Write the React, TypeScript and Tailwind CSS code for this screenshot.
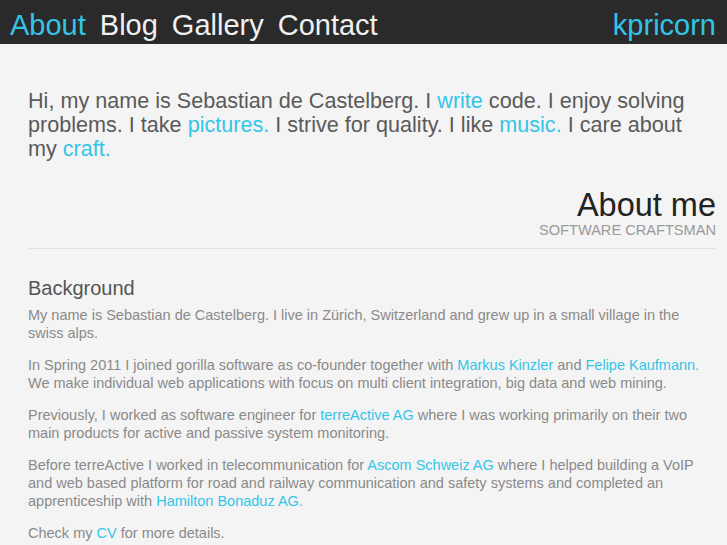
const blue = 'text-[#33c4e8]';

function A({ children }: { children: React.ReactNode }) {
  return <a className={blue}>{children}</a>;
}

export default function App() {
  return (
    <div className="min-h-[545px] bg-[#f4f4f4] font-['Liberation_Sans',sans-serif]">
      <header className="h-[44px] bg-[#2a2a2a] flex items-end justify-between pl-[10px] pr-[11px] pb-[4px]">
        <nav className="flex gap-[14px] text-[29px] leading-none text-[#f0f0f0]">
          <a className={blue}>About</a>
          <a>Blog</a>
          <a>Gallery</a>
          <a>Contact</a>
        </nav>
        <a className={`text-[29px] leading-none ${blue}`}>kpricorn</a>
      </header>

      <main className="pl-[28px] pr-[11px] pt-[45px]">
        <p className="pr-[20px] text-[21.6px] leading-[24px] text-[#5a5a5a]">
          Hi, my name is Sebastian de Castelberg. I <A>write</A> code. I enjoy solving problems. I take{' '}
          <A>pictures.</A> I strive for quality. I like <A>music.</A> I care about my <A>craft.</A>
        </p>

        <div className="mt-[27px] text-right">
          <h1 className="text-[32.5px] leading-[34px] text-[#222]">About me</h1>
          <div className="text-[14.6px] leading-[16px] text-[#999]">SOFTWARE CRAFTSMAN</div>
        </div>
        <div className="mt-[10px] border-t border-[#e2e2e2]" />

        <section className="mt-[28px] pr-[10px] text-[14.5px] leading-[18px] text-[#8a8a8a]">
          <h2 className="text-[20px] leading-[22px] text-[#555] mb-[7px]">Background</h2>
          <p className="mb-[14px]">
            My name is Sebastian de Castelberg. I live in Zürich, Switzerland and grew up in a small village in the swiss alps.
          </p>
          <p className="mb-[14px]">
            In Spring 2011 I joined gorilla software as co-founder together with <A>Markus Kinzler</A> and{' '}
            <A>Felipe Kaufmann.</A> We make individual web applications with focus on multi client integration, big data
            and web mining.
          </p>
          <p className="mb-[14px]">
            Previously, I worked as software engineer for <A>terreActive AG</A> where I was working primarily on their two
            main products for active and passive system monitoring.
          </p>
          <p className="mb-[14px]">
            Before terreActive I worked in telecommunication for <A>Ascom Schweiz AG</A> where I helped building a VoIP and
            web based platform for road and railway communication and safety systems and completed an apprenticeship with{' '}
            <A>Hamilton Bonaduz AG.</A>
          </p>
          <p>
            Check my <A>CV</A> for more details.
          </p>
        </section>
      </main>
    </div>
  );
}
